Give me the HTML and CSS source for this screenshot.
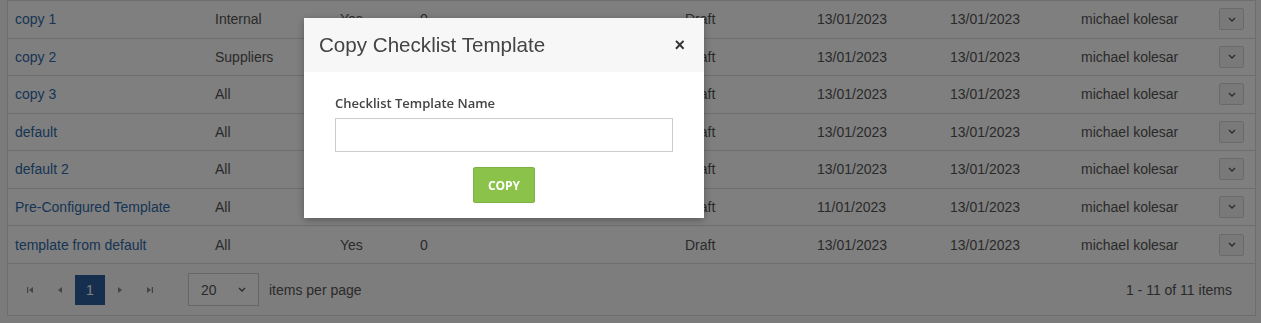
FILE: index.html
```html
<!DOCTYPE html>
<html>
<head>
    <title>Checklist Templates</title>
    <link rel="stylesheet" href="styles.css">
</head>
<body>
    <div class="grid">
        <table class="templates">
            <tbody>
                <tr>
                    <td class="c-name"><a href="#">copy 1</a></td>
                    <td class="c-type">Internal</td>
                    <td class="c-def">Yes</td>
                    <td class="c-count">0</td>
                    <td class="c-status">Draft</td>
                    <td class="c-created">13/01/2023</td>
                    <td class="c-modified">13/01/2023</td>
                    <td class="c-user">michael kolesar</td>
                    <td class="c-act"><button class="menu-btn"><svg width="8" height="5" viewBox="0 0 8 5"><path d="M1 1l3 3 3-3" fill="none" stroke="#555" stroke-width="1.3"/></svg></button></td>
                </tr>
                <tr>
                    <td class="c-name"><a href="#">copy 2</a></td>
                    <td class="c-type">Suppliers</td>
                    <td class="c-def">Yes</td>
                    <td class="c-count">0</td>
                    <td class="c-status">Draft</td>
                    <td class="c-created">13/01/2023</td>
                    <td class="c-modified">13/01/2023</td>
                    <td class="c-user">michael kolesar</td>
                    <td class="c-act"><button class="menu-btn"><svg width="8" height="5" viewBox="0 0 8 5"><path d="M1 1l3 3 3-3" fill="none" stroke="#555" stroke-width="1.3"/></svg></button></td>
                </tr>
                <tr>
                    <td class="c-name"><a href="#">copy 3</a></td>
                    <td class="c-type">All</td>
                    <td class="c-def">Yes</td>
                    <td class="c-count">0</td>
                    <td class="c-status">Draft</td>
                    <td class="c-created">13/01/2023</td>
                    <td class="c-modified">13/01/2023</td>
                    <td class="c-user">michael kolesar</td>
                    <td class="c-act"><button class="menu-btn"><svg width="8" height="5" viewBox="0 0 8 5"><path d="M1 1l3 3 3-3" fill="none" stroke="#555" stroke-width="1.3"/></svg></button></td>
                </tr>
                <tr>
                    <td class="c-name"><a href="#">default</a></td>
                    <td class="c-type">All</td>
                    <td class="c-def">Yes</td>
                    <td class="c-count">0</td>
                    <td class="c-status">Draft</td>
                    <td class="c-created">13/01/2023</td>
                    <td class="c-modified">13/01/2023</td>
                    <td class="c-user">michael kolesar</td>
                    <td class="c-act"><button class="menu-btn"><svg width="8" height="5" viewBox="0 0 8 5"><path d="M1 1l3 3 3-3" fill="none" stroke="#555" stroke-width="1.3"/></svg></button></td>
                </tr>
                <tr>
                    <td class="c-name"><a href="#">default 2</a></td>
                    <td class="c-type">All</td>
                    <td class="c-def">Yes</td>
                    <td class="c-count">0</td>
                    <td class="c-status">Draft</td>
                    <td class="c-created">13/01/2023</td>
                    <td class="c-modified">13/01/2023</td>
                    <td class="c-user">michael kolesar</td>
                    <td class="c-act"><button class="menu-btn"><svg width="8" height="5" viewBox="0 0 8 5"><path d="M1 1l3 3 3-3" fill="none" stroke="#555" stroke-width="1.3"/></svg></button></td>
                </tr>
                <tr>
                    <td class="c-name"><a href="#">Pre-Configured Template</a></td>
                    <td class="c-type">All</td>
                    <td class="c-def">Yes</td>
                    <td class="c-count">0</td>
                    <td class="c-status">Draft</td>
                    <td class="c-created">11/01/2023</td>
                    <td class="c-modified">13/01/2023</td>
                    <td class="c-user">michael kolesar</td>
                    <td class="c-act"><button class="menu-btn"><svg width="8" height="5" viewBox="0 0 8 5"><path d="M1 1l3 3 3-3" fill="none" stroke="#555" stroke-width="1.3"/></svg></button></td>
                </tr>
                <tr>
                    <td class="c-name"><a href="#">template from default</a></td>
                    <td class="c-type">All</td>
                    <td class="c-def">Yes</td>
                    <td class="c-count">0</td>
                    <td class="c-status">Draft</td>
                    <td class="c-created">13/01/2023</td>
                    <td class="c-modified">13/01/2023</td>
                    <td class="c-user">michael kolesar</td>
                    <td class="c-act"><button class="menu-btn"><svg width="8" height="5" viewBox="0 0 8 5"><path d="M1 1l3 3 3-3" fill="none" stroke="#555" stroke-width="1.3"/></svg></button></td>
                </tr>
            </tbody>
        </table>
        <div class="pager">
            <div class="pager-nav">
                <span class="pager-arrow"><svg width="8" height="8" viewBox="0 0 8 8"><rect x="1" y="1" width="1.2" height="6" fill="#888"/><path d="M7 1v6L3 4z" fill="#888"/></svg></span>
                <span class="pager-arrow"><svg width="8" height="8" viewBox="0 0 8 8"><path d="M6 1v6L2 4z" fill="#888"/></svg></span>
                <span class="pager-page">1</span>
                <span class="pager-arrow"><svg width="8" height="8" viewBox="0 0 8 8"><path d="M2 1v6l4-3z" fill="#888"/></svg></span>
                <span class="pager-arrow"><svg width="8" height="8" viewBox="0 0 8 8"><path d="M1 1v6l4-3z" fill="#888"/><rect x="5.8" y="1" width="1.2" height="6" fill="#888"/></svg></span>
            </div>
            <div class="page-size">
                <span>20</span>
                <svg width="8" height="5" viewBox="0 0 8 5"><path d="M1 1l3 3 3-3" fill="none" stroke="#555" stroke-width="1.3"/></svg>
            </div>
            <span class="pager-label">items per page</span>
            <span class="pager-info">1 - 11 of 11 items</span>
        </div>
    </div>

    <div class="overlay"></div>
    <div class="modal">
        <div class="modal-header">
            <span class="modal-title">Copy Checklist Template</span>
            <span class="modal-close">×</span>
        </div>
        <div class="modal-body">
            <label>Checklist Template Name</label>
            <input type="text" class="name-input">
            <div class="modal-actions">
                <button class="copy-btn">COPY</button>
            </div>
        </div>
    </div>
</body>
</html>
```

FILE: styles.css
```css
body {
    margin: 0 5px 0 7px;
    background-color: #f6f6f6;
    font-family: "Liberation Sans", Arial, sans-serif;
    font-size: 14px;
    color: #555;
    height: 323px;
    overflow: hidden;
}
.grid {
    border: 1px solid #dcdcdc;
    border-top: none;
    background-color: #fff;
}
table {
    width: 100%;
    border-collapse: collapse;
    font-size: 14px;
}
tr {
    height: 37.5px;
}
td {
    border-top: 1px solid #dcdcdc;
    padding: 0 7px;
    white-space: nowrap;
}
td a {
    color: #2f6aa8;
    text-decoration: none;
}
.c-name { width: 186px; }
.c-type { width: 111px; }
.c-def { width: 66px; }
.c-count { width: 251px; }
.c-status { width: 118px; }
.c-created { width: 119px; }
.c-modified { width: 117px; }
.c-user { width: 124px; }
.c-act { text-align: left; }
.menu-btn {
    width: 25px;
    height: 22px;
    border: 1px solid #d5d5d5;
    border-radius: 2px;
    background-color: #f3f3f3;
    display: flex;
    align-items: center;
    justify-content: center;
    padding: 0;
}
.pager {
    display: flex;
    align-items: center;
    height: 51px;
    border-top: 1px solid #dcdcdc;
    background-color: #fafafa;
    padding: 0 21px 0 7px;
}
.pager-nav {
    display: flex;
    align-items: center;
}
.pager-arrow {
    width: 30px;
    height: 30px;
    display: flex;
    align-items: center;
    justify-content: center;
}
.pager-page {
    width: 30px;
    height: 30px;
    background-color: #2f5e9c;
    color: #fff;
    display: flex;
    align-items: center;
    justify-content: center;
}
.page-size {
    margin-left: 23px;
    width: 71px;
    height: 33px;
    box-sizing: border-box;
    border: 1px solid #ccc;
    background-color: #fff;
    display: flex;
    align-items: center;
    justify-content: space-between;
    padding: 0 12px 0 12px;
}
.pager-label {
    margin-left: 10px;
}
.pager-info {
    margin-left: auto;
    margin-right: 2px;
}
.overlay {
    position: fixed;
    top: 0;
    left: 0;
    right: 0;
    bottom: 0;
    background-color: rgba(0, 0, 0, 0.5);
}
.modal {
    position: fixed;
    top: 18px;
    left: 304px;
    width: 400px;
    height: 200px;
    background-color: #fff;
    box-shadow: 0 2px 8px rgba(0, 0, 0, 0.3);
}
.modal-header {
    height: 54px;
    background-color: #f7f7f7;
    display: flex;
    align-items: center;
    justify-content: space-between;
    padding: 0 19px 0 15px;
}
.modal-title {
    font-size: 20.6px;
    color: #444;
}
.modal-close {
    font-size: 18px;
    font-weight: bold;
    color: #333;
}
.modal-body {
    padding: 22px 31px 0;
}
.modal-body label {
    display: block;
    font-family: "Open Sans", sans-serif;
    font-weight: 600;
    font-size: 13px;
    color: #444;
}
.name-input {
    display: block;
    box-sizing: border-box;
    width: 100%;
    height: 34px;
    margin-top: 6px;
    border: 1px solid #ccc;
}
.modal-actions {
    display: flex;
    justify-content: center;
    margin-top: 15px;
}
.copy-btn {
    width: 62px;
    height: 36px;
    background-color: #8bc34a;
    border: 1px solid #7cb342;
    border-radius: 2px;
    color: #fff;
    font-family: "Open Sans", sans-serif;
    font-weight: 700;
    font-size: 12px;
}
```
